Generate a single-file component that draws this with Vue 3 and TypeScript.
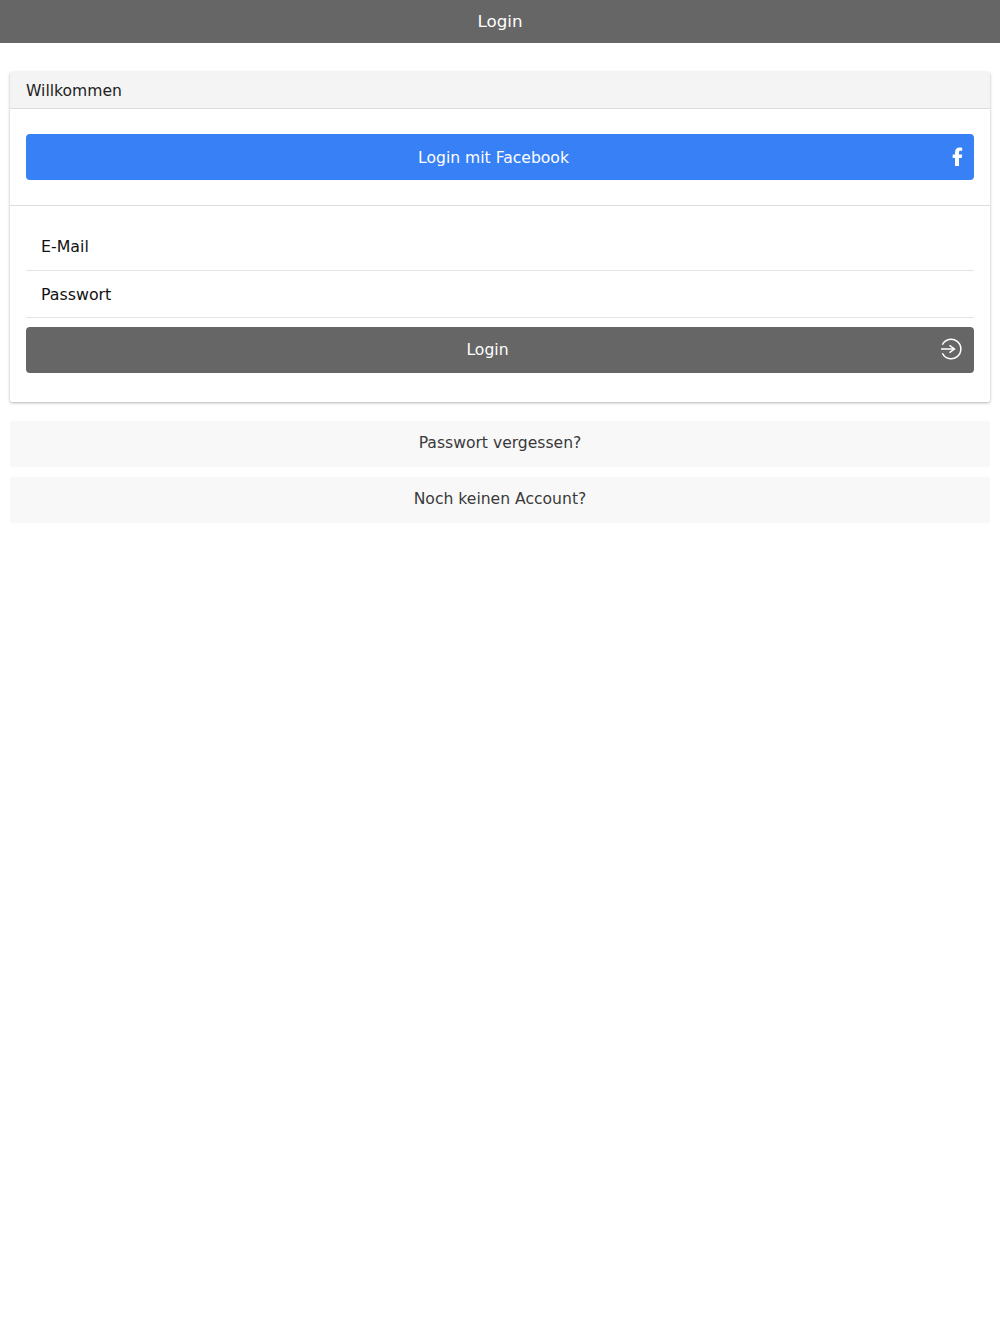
<script setup lang="ts">
const links: string[] = ['Passwort vergessen?', 'Noch keinen Account?']
</script>

<template>
  <div class="page">
    <header class="navbar">Login</header>
    <main class="content">
      <section class="card">
        <div class="card-header">Willkommen</div>
        <div class="fb-section">
          <button class="btn btn-fb" type="button">
            <span class="fb-label">Login mit Facebook</span>
            <svg class="fb-icon" width="12" height="20" viewBox="0 0 12 20" aria-hidden="true">
              <path fill="#fff" d="M3 19V10.900H.7V7.500H3V5.200C3 2.200 4.800.5 7.500.5c1.300 0 2.300.1 2.700.2v3.100H8.500c-1.300 0-1.500.6-1.500 1.500v2.200h3.200l-.5 3.400H7V19z" />
            </svg>
          </button>
        </div>
        <form class="form" @submit.prevent>
          <label class="field field-email">E-Mail</label>
          <label class="field field-pass">Passwort</label>
          <button class="btn btn-login" type="button">
            <span class="login-label">Login</span>
            <svg class="login-icon" width="22" height="22" viewBox="0 0 22 22" fill="none" stroke="#fff" stroke-width="1.500" aria-hidden="true">
              <path d="M2.400 6.800A9.700 9.700 0 1 1 2.400 15.200" />
              <path d="M1 11h13.500M9.500 7.300l5 3.700-5 3.700" />
            </svg>
          </button>
        </form>
      </section>
      <button v-for="link in links" :key="link" class="btn btn-light" type="button">{{ link }}</button>
    </main>
  </div>
</template>

<style>
html, body { margin: 0; background: #fff; }
</style>

<style scoped>
.page {
  min-height: 1334px;
  background: #fff;
  font-family: "DejaVu Sans", sans-serif;
  font-size: 15.6px;
}
.navbar {
  height: 43px;
  box-sizing: border-box;
  padding-bottom: 1px;
  background: #666;
  color: #fff;
  font-size: 16.7px;
  display: flex;
  align-items: center;
  justify-content: center;
}
.content {
  padding: 29px 10px 0;
  display: flex;
  flex-direction: column;
}
.card {
  height: 330px;
  box-sizing: border-box;
  background: #fff;
  border-radius: 2px;
  box-shadow: 0 1px 3px rgba(0, 0, 0, 0.3);
  margin-bottom: 19px;
}
.card-header {
  height: 37px;
  box-sizing: border-box;
  padding: 1px 16px 0;
  display: flex;
  align-items: center;
  background: #f4f4f4;
  border-bottom: 1px solid #ddd;
  color: #222;
}
.fb-section {
  padding: 25px 16px;
  border-bottom: 1px solid #ddd;
}
.btn {
  display: flex;
  align-items: center;
  justify-content: center;
  width: 100%;
  height: 46px;
  padding: 0;
  border: 0;
  border-radius: 4px;
  font: inherit;
  position: relative;
}
.btn-fb {
  background: #3880f6;
  color: #fff;
  padding-top: 1px;
  padding-right: 13px;
}
.fb-icon {
  position: absolute;
  right: 10px;
  top: 13px;
}
.form {
  padding: 20px 16px 0;
}
.field {
  display: flex;
  align-items: center;
  box-sizing: border-box;
  padding-left: 15px;
  color: #111;
  font-size: 15.8px;
  border-bottom: 1px solid #e4e4e4;
}
.field-email { height: 45px; padding-bottom: 3px; }
.field-pass { height: 47px; margin-bottom: 9px; }
.btn-login {
  background: #666;
  color: #fff;
  padding-right: 25px;
}
.login-icon {
  position: absolute;
  right: 12px;
  top: 11px;
}
.btn-light {
  background: #f8f8f8;
  color: #3a3a3a;
  margin-bottom: 10px;
  padding-bottom: 2px;
}
</style>
